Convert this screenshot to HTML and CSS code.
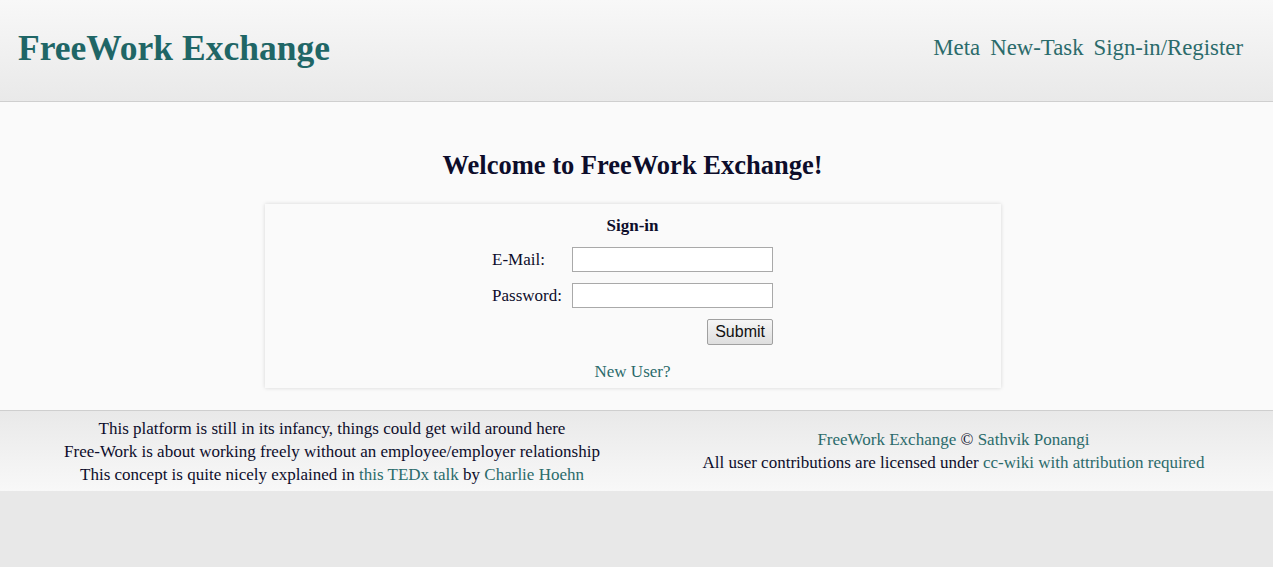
FILE: index.html
```html
<!DOCTYPE html>
<html>
<head>
<meta charset="utf-8">
<link rel="stylesheet" href="styles.css">
</head>
<body>
<header class="topbar">
  <a class="brand" href="#">FreeWork Exchange</a>
  <nav class="nav">
    <a href="#">Meta</a>
    <a href="#">New-Task</a>
    <a href="#">Sign-in/Register</a>
  </nav>
</header>
<main class="main">
  <h1 class="welcome">Welcome to FreeWork Exchange!</h1>
  <section class="card">
    <h2 class="card-title">Sign-in</h2>
    <form class="form">
      <label class="lbl">E-Mail:</label>
      <input class="field" type="text">
      <label class="lbl">Password:</label>
      <input class="field" type="password">
      <span></span>
      <div class="btn-row"><button type="button" class="btn">Submit</button></div>
    </form>
    <a class="new-user" href="#">New User?</a>
  </section>
</main>
<footer class="footer">
  <div class="foot-col">
    <p>This platform is still in its infancy, things could get wild around here</p>
    <p>Free-Work is about working freely without an employee/employer relationship</p>
    <p>This concept is quite nicely explained in <a href="#">this TEDx talk</a> by <a href="#">Charlie Hoehn</a></p>
  </div>
  <div class="foot-col">
    <p><a href="#">FreeWork Exchange</a> © <a href="#">Sathvik Ponangi</a></p>
    <p>All user contributions are licensed under <a href="#">cc-wiki with attribution required</a></p>
  </div>
</footer>
</body>
</html>
```
FILE: styles.css
```css
html, body { margin: 0; padding: 0; }
body {
  background: #e8e8e8;
  font-family: "Liberation Serif", "Times New Roman", serif;
  color: #0d0d2b;
  font-size: 17px;
}
a { color: #2b6b6b; text-decoration: none; }

.topbar {
  height: 101px;
  border-bottom: 1px solid #cfcfcf;
  background: linear-gradient(#f8f8f8, #e9e9e9);
  display: flex;
  align-items: center;
  justify-content: space-between;
  padding: 0 30px 0 18px;
  box-sizing: content-box;
}
.brand {
  font-size: 35.5px;
  font-weight: bold;
  color: #1f6666;
  margin-top: -6px;
}
.nav {
  display: flex;
  gap: 10px;
  font-size: 22.8px;
  margin-top: -6px;
}
.nav a { color: #2b6b6b; }

.main {
  background: #fafafa;
  height: 308px;
  box-sizing: border-box;
  padding-top: 1px;
  display: flex;
  flex-direction: column;
  align-items: center;
}
.welcome {
  margin: 47px 0 0;
  font-size: 26.5px;
  line-height: 30px;
  font-weight: bold;
  color: #0d0d2b;
  transform: translateX(-4px);
}
.card {
  margin-top: 24px;
  width: 736px;
  height: 184px;
  box-sizing: border-box;
  background: #fafafa;
  box-shadow: 0 0 4px rgba(0,0,0,0.15);
  display: flex;
  flex-direction: column;
  align-items: center;
  padding-top: 12px;
  transform: translateX(-4px);
}
.card-title {
  margin: 0;
  font-size: 17px;
  line-height: 19px;
  font-weight: bold;
}
.form {
  margin-top: 12px;
  display: grid;
  grid-template-columns: auto 201px;
  column-gap: 10px;
  row-gap: 11px;
  align-items: center;
}
.lbl { font-size: 17px; }
.field {
  width: 201px;
  height: 25px;
  box-sizing: border-box;
  border: 1px solid #a9a9a9;
  background: #fff;
  margin: 0;
}
.btn-row { display: flex; justify-content: flex-end; }
.btn {
  font-family: "Liberation Sans", Arial, sans-serif;
  font-size: 16px;
  height: 26px;
  padding: 0 7px;
  border: 1px solid #a0a0a0;
  border-radius: 2px;
  background: linear-gradient(#f6f6f6, #dedede);
  color: #111;
  margin: 0;
}
.new-user { margin-top: 17px; font-size: 17px; line-height: 20px; }

.footer {
  border-top: 1px solid #cfcfcf;
  height: 80px;
  background: linear-gradient(#e9e9e9, #f8f8f8);
  display: grid;
  grid-template-columns: 664px 1fr;
  align-items: center;
  padding-right: 30px;
}
.foot-col { text-align: center; }
.foot-col p { margin: 0; line-height: 23px; }
```
